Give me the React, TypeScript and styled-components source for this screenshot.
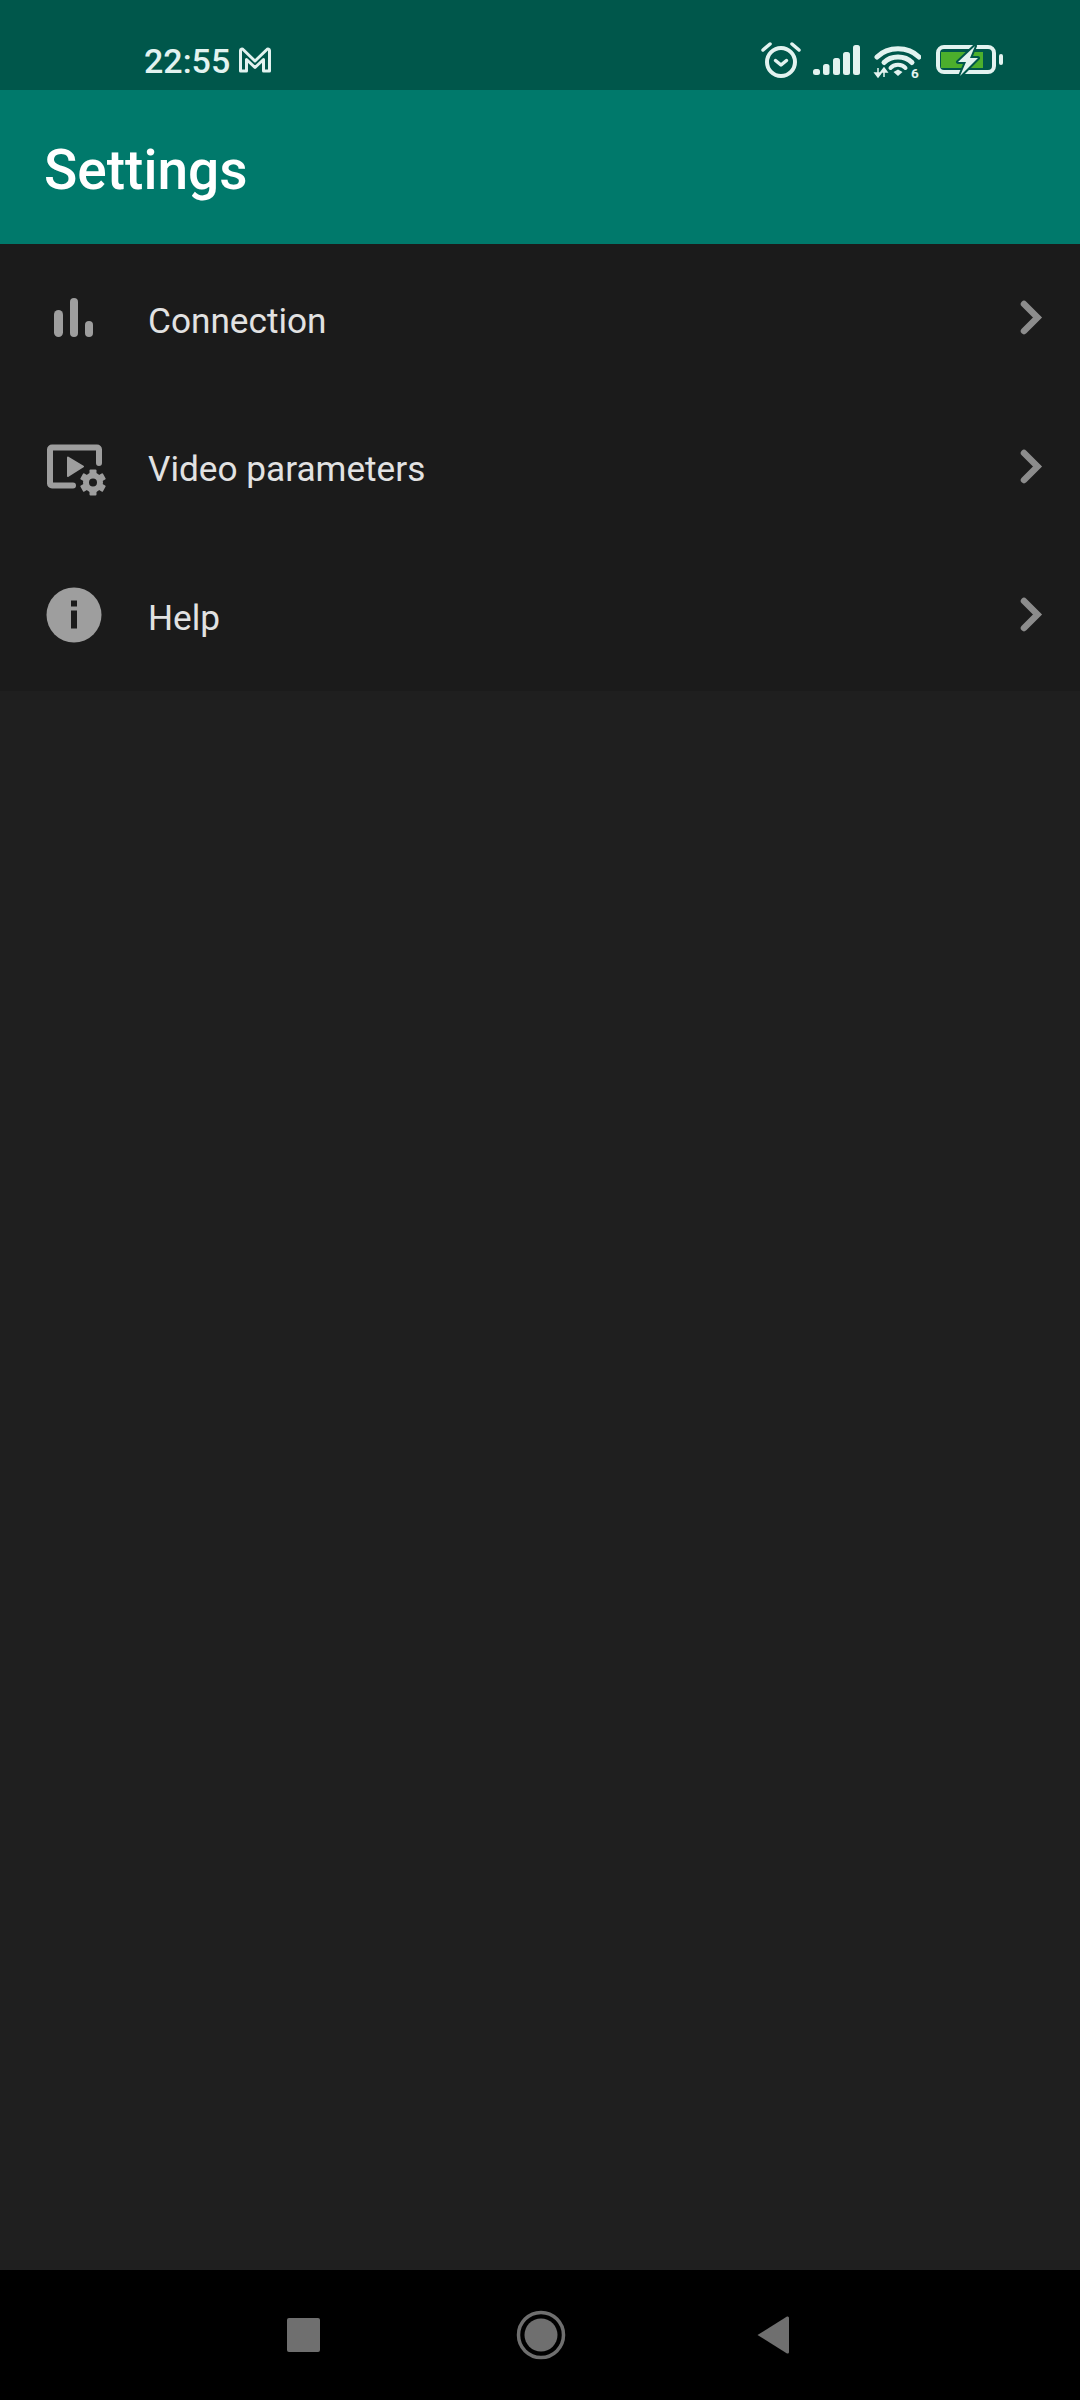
import React from "react";
import styled, { createGlobalStyle } from "styled-components";

const GlobalStyle = createGlobalStyle`
  html, body {
    margin: 0;
    padding: 0;
    background: #1f1f1f;
  }
  * {
    box-sizing: border-box;
  }
`;

const Screen = styled.div`
  width: 1080px;
  height: 2400px;
  display: flex;
  flex-direction: column;
  font-family: Roboto, "Liberation Sans", sans-serif;
  background: #1f1f1f;
  overflow: hidden;
`;

const StatusBar = styled.div`
  height: 90px;
  flex-shrink: 0;
  padding: 38px 0 0 144px;
  display: flex;
  align-items: flex-start;
  background: #00574b;
  color: #e3f3f0;
`;

const Clock = styled.span`
  font-size: 34px;
  line-height: 46px;
  font-weight: 500;
`;

const MailIcon = styled.svg`
  width: 34px;
  height: 28px;
  margin: 8px 0 0 8px;
`;

const StatusIcons = styled.div`
  margin-left: auto;
  margin-right: 76px;
  margin-top: 3px;
  display: flex;
  align-items: flex-start;
`;

const StatusIcon = styled.svg<{ $left: number; $top?: number }>`
  display: block;
  margin-left: ${(p) => p.$left}px;
  margin-top: ${(p) => p.$top ?? 0}px;
`;

const Header = styled.header`
  height: 154px;
  flex-shrink: 0;
  padding: 6px 0 0 44px;
  display: flex;
  align-items: center;
  background: #00796b;
`;

const Title = styled.h1`
  margin: 0;
  font-size: 55px;
  font-weight: 500;
  color: #ffffff;
`;

const List = styled.div`
  height: 447px;
  flex-shrink: 0;
  background: #1b1b1b;
  display: flex;
  flex-direction: column;
`;

const Row = styled.div`
  height: 148.5px;
  padding: 0 24px 0 0;
  display: flex;
  align-items: center;
`;

const RowIcon = styled.svg`
  width: 148px;
  height: 80px;
  flex-shrink: 0;
  color: #9e9e9e;
`;

const RowLabel = styled.span`
  flex: 1;
  margin-top: 5px;
  font-size: 35.2px;
  color: #e2e2e2;
`;

const Chevron = styled.svg`
  width: 30px;
  height: 44px;
  margin: 0 9px 0 0;
  color: #8c8c8c;
`;

const Filler = styled.div`
  flex: 1;
`;

const NavBar = styled.nav`
  height: 130px;
  flex-shrink: 0;
  background: #000000;
  padding-left: 287px;
  display: flex;
  align-items: center;
  color: #6f6f6f;
`;

const NavSquare = styled.div`
  width: 33px;
  height: 34px;
  border-radius: 2px;
  background: #6f6f6f;
`;

const NavHome = styled.svg`
  width: 52px;
  height: 52px;
  margin-left: 195px;
`;

const NavBack = styled.svg`
  width: 34px;
  height: 40px;
  margin-left: 189px;
`;

const rows = [
  {
    label: "Connection",
    icon: (
      <>
        <rect x="54" y="32" width="9" height="27" rx="4.5" fill="currentColor" />
        <rect x="70" y="20" width="8" height="39" rx="4" fill="currentColor" />
        <rect x="85" y="43" width="8" height="16" rx="4" fill="currentColor" />
      </>
    ),
  },
  {
    label: "Video parameters",
    icon: (
      <>
        <path
          d="M73 58.5H52a2 2 0 0 1-2-2V22.500a2 2 0 0 1 2-2h45a2 2 0 0 1 2 2V36"
          fill="none"
          stroke="currentColor"
          strokeWidth="6"
          strokeLinecap="round"
          strokeLinejoin="round"
        />
        <path d="M68 30.500 L83 39.500 L68 49Z" fill="currentColor" stroke="currentColor" strokeWidth="2" strokeLinejoin="round" />
        <circle cx="93" cy="55.500" r="7" fill="none" stroke="currentColor" strokeWidth="6" />
        <g fill="currentColor">
          {[0, 60, 120, 180, 240, 300].map((a) => (
            <rect key={a} x="89.500" y="42.500" width="7" height="6" rx="1" transform={`rotate(${a} 93 55.500)`} />
          ))}
        </g>
      </>
    ),
  },
  {
    label: "Help",
    icon: (
      <>
        <circle cx="74" cy="40" r="27.500" fill="currentColor" />
        <rect x="71" y="25.500" width="6" height="6" fill="#1b1b1b" />
        <rect x="71" y="35.500" width="6" height="18" fill="#1b1b1b" />
      </>
    ),
  },
];

const App = () => {
  return (
    <Screen>
      <GlobalStyle />
      <StatusBar>
        <Clock>22:55</Clock>
        <MailIcon viewBox="0 0 34 28">
          <path
            d="M2.500 25V4.500a1.500 1.500 0 0 1 2.600-1L17 15 28.900 3.500a1.500 1.500 0 0 1 2.600 1V25h-6V13.500L17 21.500 8.500 13.500V25Z"
            fill="none"
            stroke="currentColor"
            strokeWidth="3"
            strokeLinejoin="round"
          />
        </MailIcon>
        <StatusIcons>
          <StatusIcon $left={0} width="40" height="38" viewBox="0 0 40 38">
            <circle cx="20" cy="21" r="14" fill="none" stroke="currentColor" strokeWidth="4" />
            <path d="M2 9 L9 3 M38 9 L31 3" stroke="currentColor" strokeWidth="3.500" strokeLinecap="round" />
            <path d="M14.500 19.500 L20 24 L25.500 19.500" fill="none" stroke="currentColor" strokeWidth="3.500" strokeLinecap="round" strokeLinejoin="round" />
          </StatusIcon>
          <StatusIcon $left={12} $top={4} width="48" height="30" viewBox="0 0 48 30">
            <rect x="0" y="24" width="7" height="6" rx="2.500" fill="currentColor" />
            <rect x="10" y="19" width="6.500" height="11" rx="2.500" fill="currentColor" />
            <rect x="20" y="13" width="7" height="17" rx="2.500" fill="currentColor" />
            <rect x="30" y="7" width="7" height="23" rx="2.500" fill="currentColor" />
            <rect x="40" y="0" width="7" height="30" rx="2.500" fill="currentColor" />
          </StatusIcon>
          <StatusIcon $left={12} $top={4} width="48" height="34" viewBox="0 0 48 34">
            <path d="M4 12 C15 1 35 1 46 12" fill="none" stroke="currentColor" strokeWidth="5" strokeLinecap="round" />
            <path d="M11 17.500 C18 10 32 10 39 17.500" fill="none" stroke="currentColor" strokeWidth="5" strokeLinecap="round" />
            <path d="M17.500 23 C21 18.500 29 18.500 32.500 23" fill="none" stroke="currentColor" strokeWidth="4" strokeLinecap="round" />
            <path d="M20.500 27 L25 24.500 L29.500 27 L25 31Z" fill="currentColor" />
            <path d="M5 23 v9 M2 28 l3 4 l3 -4Z M11 32 v-9 M8 27 l3 -4 l3 4Z" fill="currentColor" stroke="currentColor" strokeWidth="1.500" />
            <text x="38" y="32.500" fontSize="13.500" fontWeight="700" fontFamily="Roboto, sans-serif" fill="currentColor">6</text>
          </StatusIcon>
          <StatusIcon $left={13} $top={3} width="70" height="34" viewBox="0 0 70 34">
            <rect x="4" y="3" width="56" height="25" rx="6" fill="none" stroke="currentColor" strokeWidth="4" />
            <rect x="65" y="10" width="4" height="11" rx="2" fill="currentColor" />
            <rect x="7" y="8" width="42" height="16" fill="#4caf2c" />
            <path d="M41 2 L24 18 H32 L26 32 L44 14 H36Z" fill="currentColor" stroke="#00574b" strokeWidth="4" strokeLinejoin="round" paintOrder="stroke" />
          </StatusIcon>
        </StatusIcons>
      </StatusBar>
      <Header>
        <Title>Settings</Title>
      </Header>
      <List>
        {rows.map((row) => (
          <Row key={row.label}>
            <RowIcon viewBox="0 0 148 80">{row.icon}</RowIcon>
            <RowLabel>{row.label}</RowLabel>
            <Chevron viewBox="0 0 30 44">
              <path d="M7 8 L20.500 21.500 L7 35" fill="none" stroke="currentColor" strokeWidth="6.500" strokeLinecap="round" strokeLinejoin="miter" />
            </Chevron>
          </Row>
        ))}
      </List>
      <Filler />
      <NavBar>
        <NavSquare />
        <NavHome viewBox="0 0 52 52">
          <circle cx="26" cy="26" r="22.500" fill="none" stroke="currentColor" strokeWidth="3.500" />
          <circle cx="26" cy="26" r="16.500" fill="currentColor" />
        </NavHome>
        <NavBack viewBox="0 0 34 40">
          <path d="M1.500 20 L31 1.500 Q33 1 33 3 V37 Q33 39 31 38.500Z" fill="currentColor" />
        </NavBack>
      </NavBar>
    </Screen>
  );
};

export default App;
